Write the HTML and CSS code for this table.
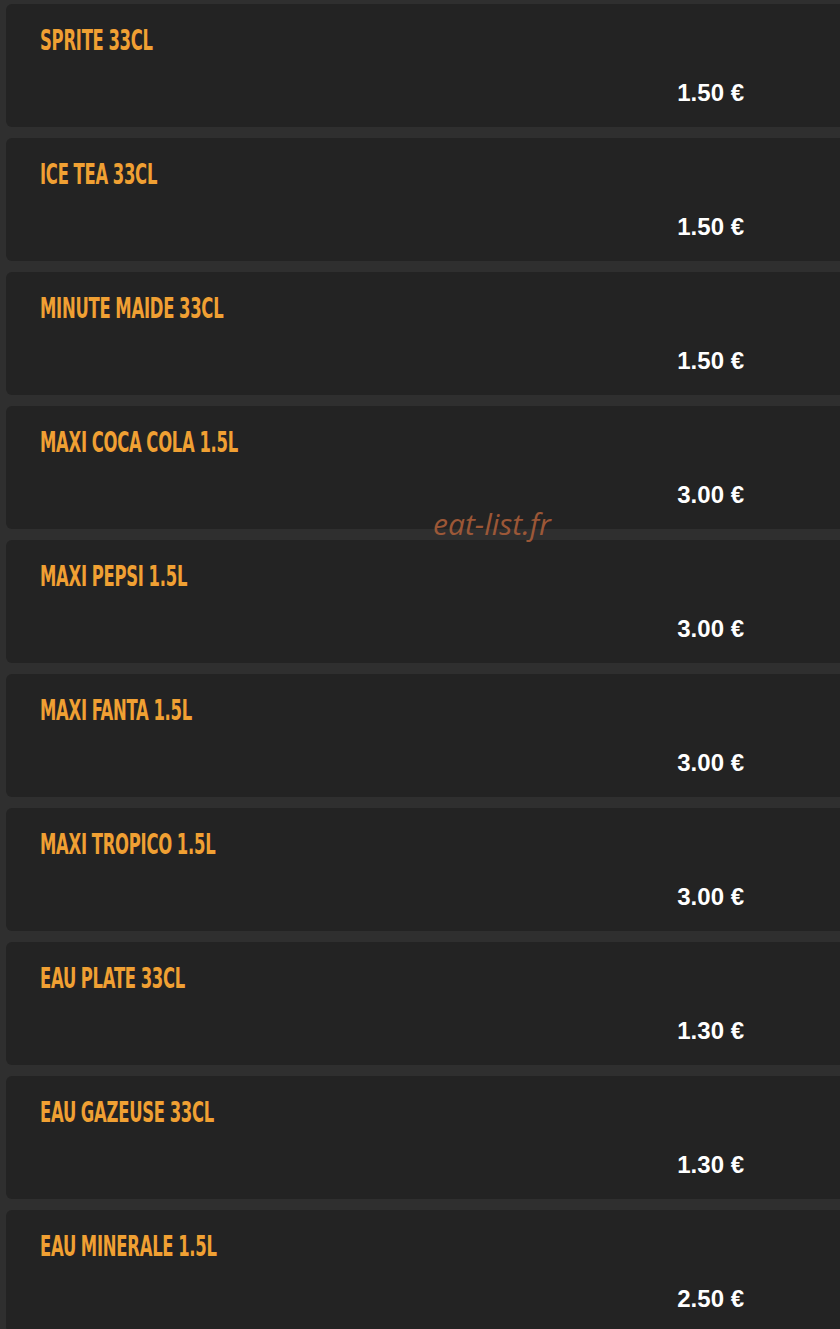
FILE: index.html
```html
<!DOCTYPE html>
<html lang="fr">
<head>
    <meta charset="UTF-8">
    <meta name="viewport" content="width=device-width, initial-scale=1.0">
    <title>Boissons</title>
    <link rel="stylesheet" href="styles.css">
</head>
<body>
    <div class="menu">
        <div class="item"><div class="name"><span>SPRITE 33CL</span></div><div class="price">1.50 €</div></div>
        <div class="item"><div class="name"><span>ICE TEA 33CL</span></div><div class="price">1.50 €</div></div>
        <div class="item"><div class="name"><span>MINUTE MAIDE 33CL</span></div><div class="price">1.50 €</div></div>
        <div class="item"><div class="name"><span>MAXI COCA COLA 1.5L</span></div><div class="price">3.00 €</div></div>
        <div class="item"><div class="name"><span>MAXI PEPSI 1.5L</span></div><div class="price">3.00 €</div></div>
        <div class="item"><div class="name"><span>MAXI FANTA 1.5L</span></div><div class="price">3.00 €</div></div>
        <div class="item"><div class="name"><span>MAXI TROPICO 1.5L</span></div><div class="price">3.00 €</div></div>
        <div class="item"><div class="name"><span>EAU PLATE 33CL</span></div><div class="price">1.30 €</div></div>
        <div class="item"><div class="name"><span>EAU GAZEUSE 33CL</span></div><div class="price">1.30 €</div></div>
        <div class="item"><div class="name"><span>EAU MINERALE 1.5L</span></div><div class="price">2.50 €</div></div>
    </div>
    <div class="watermark">eat-list.fr</div>
</body>
</html>
```

FILE: styles.css
```css
body {
    margin: 0;
    background: #2f2f2f;
    overflow: hidden;
}

.menu {
    padding: 4px 0 0 6px;
}

.item {
    height: 123px;
    box-sizing: border-box;
    margin: 0 -10px 11px 0;
    padding: 18px 96px 0 34px;
    background: #232323;
    border-radius: 6px;
}

.name {
    height: 36px;
    font-family: "DejaVu Sans", sans-serif;
    font-stretch: condensed;
    font-weight: bold;
    font-size: 29px;
    line-height: 36px;
    color: #f0a033;
    white-space: nowrap;
}

.name span {
    display: inline-block;
    transform: scaleX(0.63);
    transform-origin: left center;
    letter-spacing: -0.4px;
    word-spacing: -1px;
}

.price {
    margin-top: 22px;
    padding-right: 10px;
    text-align: right;
    font-family: "Liberation Sans", Arial, sans-serif;
    font-weight: bold;
    font-size: 24px;
    line-height: 26px;
    color: #fff;
}

.watermark {
    position: absolute;
    left: 433px;
    top: 503px;
    font-family: "Open Sans", sans-serif;
    font-style: italic;
    font-size: 30px;
    color: #b0603a;
    opacity: 0.85;
}
```
